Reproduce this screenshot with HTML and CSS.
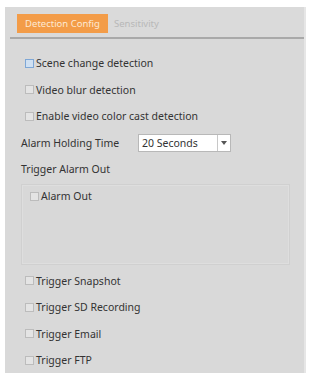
FILE: index.html
```html
<!DOCTYPE html>
<html>
<head>
<meta charset="utf-8">
<link rel="stylesheet" href="styles.css">
</head>
<body>
<div class="panel">
  <div class="tabs">
    <div class="tab active">Detection Config</div>
    <div class="tab">Sensitivity</div>
  </div>
  <div class="content">
    <label class="row chk"><span class="box blue"></span>Scene change detection</label>
    <label class="row chk"><span class="box"></span>Video blur detection</label>
    <label class="row chk"><span class="box"></span>Enable video color cast detection</label>
    <div class="row hold">
      <span class="lbl">Alarm Holding Time</span>
      <div class="select"><span class="val">20 Seconds</span><span class="arrow"><svg width="6" height="4" viewBox="0 0 6 4"><path d="M0 0h6L3 4z" fill="#555"/></svg></span></div>
    </div>
    <div class="row plain">Trigger Alarm Out</div>
    <div class="outbox">
      <label class="chk inner"><span class="box"></span>Alarm Out</label>
    </div>
    <label class="row chk after"><span class="box"></span>Trigger Snapshot</label>
    <label class="row chk"><span class="box"></span>Trigger SD Recording</label>
    <label class="row chk"><span class="box"></span>Trigger Email</label>
    <label class="row chk"><span class="box"></span>Trigger FTP</label>
  </div>
</div>
</body>
</html>
```
FILE: styles.css
```css
html, body { margin: 0; padding: 0; background: #fff; }
body { font-family: "Noto Sans", "Open Sans", sans-serif; font-size: 10.5px; color: #333; }
.panel {
  margin: 7px 3px 0 5px;
  background: #d9d9d9;
  border-right: 2px solid #e6e6e6;
  height: 366px;
  overflow: hidden;
}
.tabs {
  display: flex;
  align-items: flex-end;
  gap: 6px;
  padding: 7px 0 0 7px;
  margin-left: 5px;
  height: 23px;
  border-bottom: 2px solid #a9a9a9;
  background: #dadada;
  box-sizing: content-box;
}
.tab {
  height: 19px;
  line-height: 19px;
  margin-bottom: 4px;
  font-size: 9.5px;
  color: #b8b8b8;
}
.tab.active {
  background: #f39c48;
  color: #fde9d3;
  width: 91px;
  text-align: center;
}
.content { padding: 11px 0 0 16px; }
.row { height: 26.6px; display: flex; align-items: center; }
.chk { padding-left: 4px; }
.box {
  width: 9px; height: 9px;
  border: 1px solid #bcbcbc;
  background: #e4e4e4;
  margin-right: 2px;
  box-sizing: border-box;
  flex: none;
}
.box.blue { border-color: #7ea7d6; background: #cfe0f2; }
.hold .lbl { width: 117px; }
.select {
  display: flex;
  width: 93px; height: 18px;
  background: #fff;
  border: 1px solid #b8b8b8;
  box-sizing: border-box;
}
.select .val { flex: 1; padding-left: 3px; line-height: 16px; color: #333; }
.select .arrow {
  width: 12px;
  border-left: 1px solid #c8c8c8;
  display: flex; align-items: center; justify-content: center;
}
.plain { height: 26px; }
.outbox {
  margin: 2px 14px 0 0;
  height: 81px;
  border: 1px solid #d0d0d0;
  box-shadow: inset 0 0 0 1px #dedede;
  background: #d8d8d8;
  padding: 4px 0 0 4px;
  box-sizing: border-box;
}
.inner { display: flex; align-items: center; }
.after { margin-top: 2px; }
```
